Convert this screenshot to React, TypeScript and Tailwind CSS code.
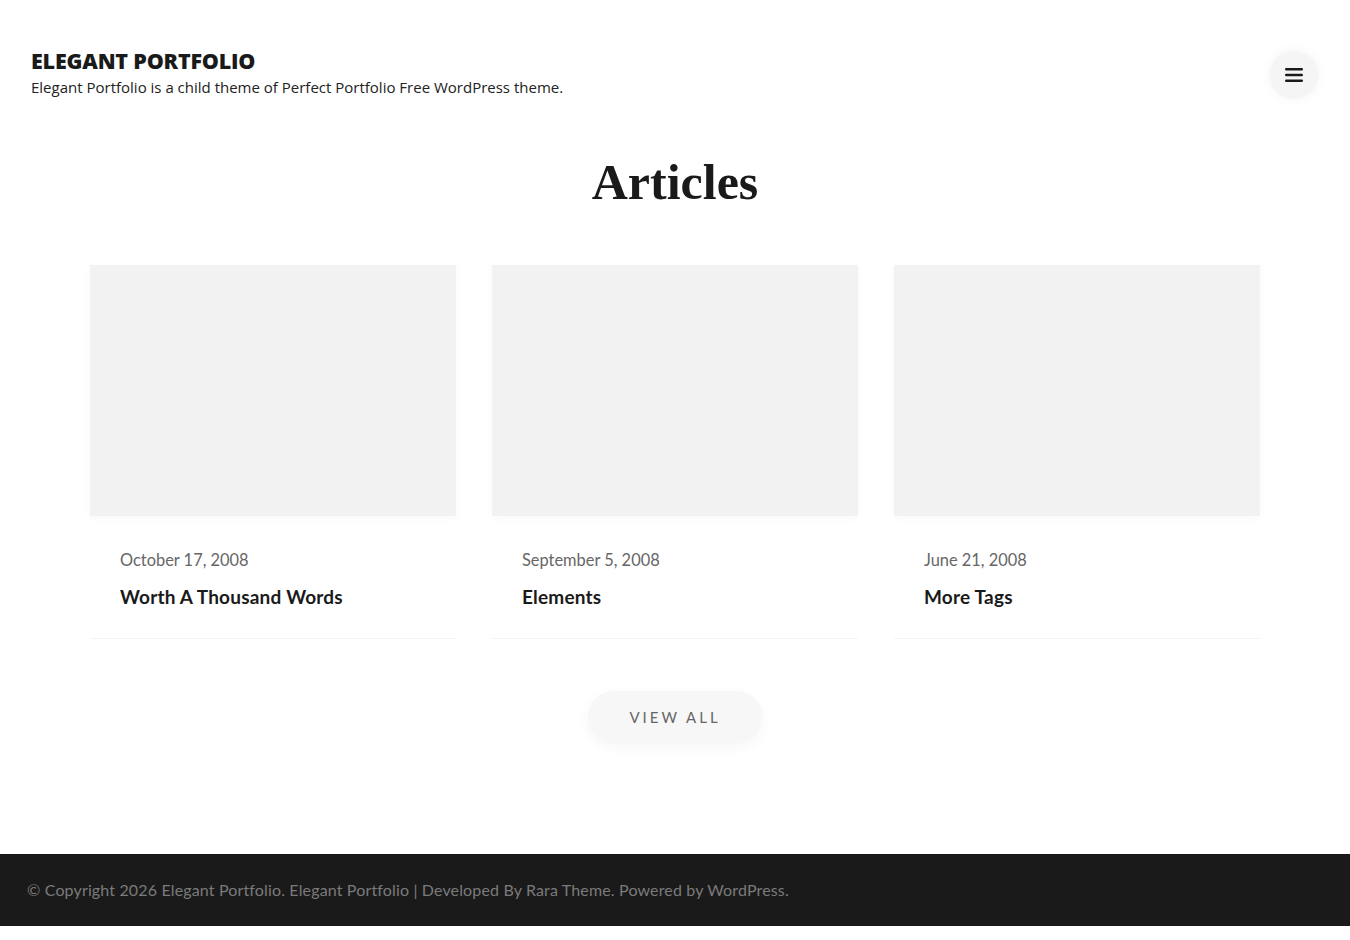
import { useState } from "react";

const posts = [
  { date: "October 17, 2008", title: "Worth A Thousand Words" },
  { date: "September 5, 2008", title: "Elements" },
  { date: "June 21, 2008", title: "More Tags" },
];

const MenuIcon = () => (
  <svg width="18" height="16" viewBox="0 0 18 16" fill="none">
    <path d="M1.2 2.2h15.6M1.2 8h15.6M1.2 13.8h15.6" stroke="#1a1a1a" strokeWidth="2.4" strokeLinecap="round" />
  </svg>
);

const App = () => {
  const [open, setOpen] = useState(false);

  return (
    <div className="bg-white text-[#1a1a1a]">
      <header className="flex items-start justify-between pl-[31px] pr-[32px] pt-[47px]">
        <div>
          <p className="font-['Open_Sans',sans-serif] text-[21.5px] font-extrabold leading-[28px] tracking-[-0.2px] text-[#1a1a1a]">
            ELEGANT PORTFOLIO
          </p>
          <p className="mt-[2px] font-['Open_Sans',sans-serif] text-[15px] leading-[20px] text-[#222]">
            Elegant Portfolio is a child theme of Perfect Portfolio Free WordPress theme.
          </p>
        </div>
        <button
          onClick={() => setOpen(!open)}
          className="mt-[4px] flex h-[48px] w-[48px] items-center justify-center rounded-full bg-[#f5f5f5] shadow-[0_0_12px_rgba(0,0,0,0.05)]"
          aria-label="Menu"
        >
          <MenuIcon />
        </button>
      </header>

      <main className="pb-[111px]">
        <h2 className="mt-[53px] text-center font-['Liberation_Serif',serif] text-[50px] font-bold leading-[60px] text-[#1a1a1a]">
          Articles
        </h2>

        <div className="mx-auto mt-[53px] grid w-[1170px] grid-cols-3 gap-[36px]">
          {posts.map((post) => (
            <article key={post.title} className="border-b border-[#f4f4f4]">
              <div className="h-[251px] bg-[#f2f2f2] shadow-[0_2px_8px_rgba(0,0,0,0.03)]" />
              <div className="px-[30px] pb-[28px] pt-[32px] font-['Lato',sans-serif]">
                <p className="text-[16.4px] leading-[24px] text-[#666]">{post.date}</p>
                <h3 className="mt-[12px] text-[19px] font-bold leading-[26px] tracking-[0.2px] text-[#1a1a1a]">
                  {post.title}
                </h3>
              </div>
            </article>
          ))}
        </div>

        <div className="mt-[52px] flex justify-center">
          <a
            href="#"
            className="flex h-[52px] w-[174px] items-center justify-center rounded-full bg-[#f7f7f7] font-['Lato',sans-serif] text-[15px] tracking-[3px] text-[#666] shadow-[0_4px_14px_rgba(0,0,0,0.04)]"
          >
            VIEW ALL
          </a>
        </div>
      </main>

      <footer className="flex h-[72px] items-center bg-[#1a1a1a] px-[27px]">
        <p className="font-['Lato',sans-serif] text-[16px] tracking-[0.15px] text-[#7a7a7a]">
          © Copyright 2026 Elegant Portfolio. Elegant Portfolio | Developed By Rara Theme. Powered by WordPress.
        </p>
      </footer>
    </div>
  );
};

export default App;
